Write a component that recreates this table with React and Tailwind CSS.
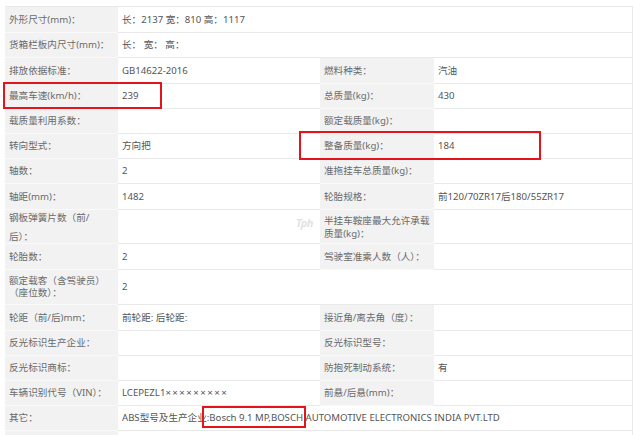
import React from "react";

function L({ children, h, extra = "" }) {
  return (
    <div className={`${h} flex items-center px-[4px] bg-[#f2f2f2] text-[#6a6a6a] border-b border-[#f9f9f9] ${extra}`}>
      <div>{children}</div>
    </div>
  );
}

function V({ children, h, extra = "" }) {
  return (
    <div className={`${h} flex items-center px-[4px] text-[#555] border-b border-[#e9e9e9] ${extra}`}>
      <div>{children}</div>
    </div>
  );
}

function Row({ h, a, b, c, d, full, blank }) {
  if (full !== undefined) {
    return (
      <>
        <L h={h}>{a}</L>
        <V h={h} extra="col-span-3">{full}</V>
      </>
    );
  }
  if (blank) {
    return (
      <>
        <L h={h}>{a}</L>
        <V h={h}>{b}</V>
        <V h={h} extra="col-span-2"></V>
      </>
    );
  }
  return (
    <>
      <L h={h}>{a}</L>
      <V h={h}>{b}</V>
      <L h={h}>{c}</L>
      <V h={h}>{d}</V>
    </>
  );
}

export default function App() {
  return (
    <div className="relative w-[641px] h-[435px] overflow-hidden bg-white pt-[6px] pl-[5px] font-['Noto_Sans','Noto_Sans_CJK_SC',sans-serif] text-[9.6px] leading-[12px]">
      <div className="grid grid-cols-[113px_202px_114px_198px] w-[628px] border-t border-r border-[#e9e9e9]">
        <Row h="h-[26px]" a="外形尺寸(mm)：" full="长：2137 宽：810 高：1117" />
        <Row h="h-[25px]" a="货箱栏板内尺寸(mm)：" full="长： 宽： 高：" />
        <Row h="h-[26px]" a="排放依据标准：" b="GB14622-2016" c="燃料种类：" d="汽油" />
        <Row h="h-[25px]" a="最高车速(km/h)：" b="239" c="总质量(kg)：" d="430" />
        <Row h="h-[25px]" a="载质量利用系数：" b="" c="额定载质量(kg)：" d="" />
        <Row h="h-[25px]" a="转向型式：" b="方向把" c="整备质量(kg)：" d="184" />
        <Row h="h-[25px]" a="轴数：" b="2" c="准拖挂车总质量(kg)：" d="" />
        <Row h="h-[26px]" a="轴距(mm)：" b="1482" c="轮胎规格：" d="前120/70ZR17后180/55ZR17" />
        <Row
          h="h-[34px]"
          a={<div className="leading-[19px]">钢板弹簧片数（前/<br />后）：</div>}
          b=""
          c={<div className="leading-[13px]">半挂车鞍座最大允许承载<br />质量(kg)：</div>}
          d=""
        />
        <Row h="h-[26px]" a="轮胎数：" b="2" c="驾驶室准乘人数（人）：" d="" />
        <Row
          h="h-[35px]"
          a={<div className="leading-[12px]">额定载客（含驾驶员）<br />（座位数）：</div>}
          b="2"
          blank
        />
        <Row h="h-[26px]" a="轮距（前/后)mm：" b="前轮距: 后轮距:" c="接近角/离去角（度）：" d="" />
        <Row h="h-[25px]" a="反光标识生产企业：" b="" c="反光标识型号：" d="" />
        <Row h="h-[25px]" a="反光标识商标：" b="" c="防抱死制动系统：" d="有" />
        <Row
          h="h-[25px]"
          a="车辆识别代号（VIN）："
          b={<span>LCEPEZL1<span className="tracking-[1.5px]">×××××××××</span></span>}
          c="前悬/后悬(mm)："
          d=""
        />
        <Row h="h-[25px]" a="其它：" full="ABS型号及生产企业:Bosch 9.1 MP,BOSCH AUTOMOTIVE ELECTRONICS INDIA PVT.LTD" />
        <Row h="h-[25px]" a="" full="" />
      </div>

      <div className="absolute left-[296px] top-[217px] text-[11px] font-bold italic text-[#dfe3e8] tracking-[-0.5px]">Tph</div>

      <div className="absolute left-[3px] top-[82px] w-[159px] h-[27px] border-2 border-[#e3141c]"></div>
      <div className="absolute left-[299px] top-[131px] w-[242px] h-[29px] border-2 border-[#e3141c]"></div>
      <div className="absolute left-[202px] top-[406px] w-[104px] h-[22px] border-2 border-[#e3141c]"></div>
    </div>
  );
}
